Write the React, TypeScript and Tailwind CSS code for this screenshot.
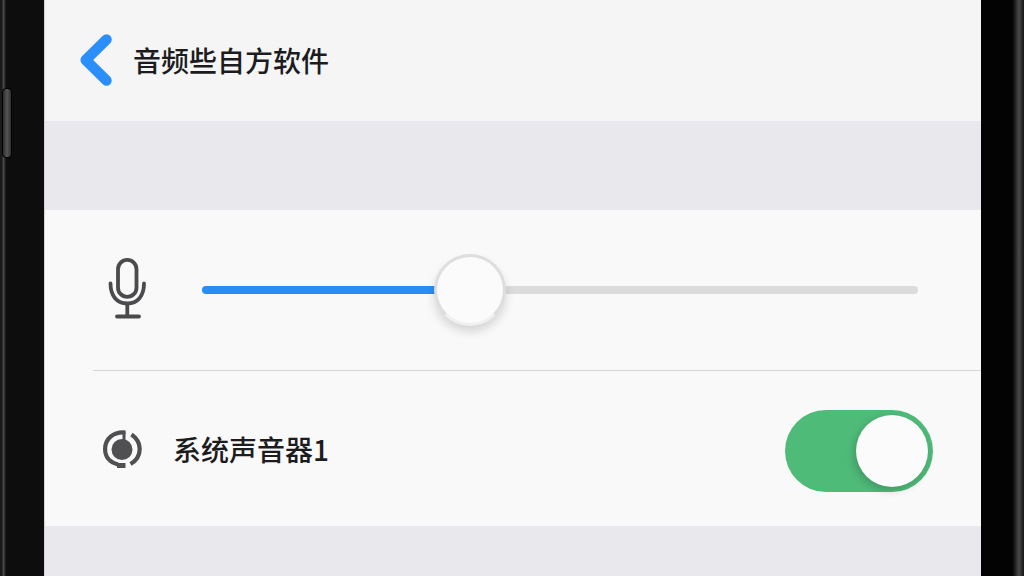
import { useState } from "react";

function BackIcon() {
    return (
        <svg className="h-13 w-8 shrink-0" viewBox="0 0 32 52" fill="none" aria-hidden="true">
            <path d="M26.500 5.500 5.700 26l20.800 20.500" stroke="#2a8ffa" strokeWidth="10.500" strokeLinecap="round" strokeLinejoin="round" />
        </svg>
    )
}

function MicIcon() {
    return (
        <svg className="h-16 w-10 shrink-0" viewBox="0 0 40 64" fill="none" stroke="#4b4b4d" strokeWidth="3.800" strokeLinecap="round" aria-hidden="true">
            <rect x="10" y="1.900" width="18.500" height="37" rx="9.250" />
            <path d="M2.500 25.500c0 12.500 6.500 20 16.800 20S36 38 36 25.500" />
            <path d="M19.300 46v12M9 58.500h22" />
        </svg>
    )
}

function SoundIcon() {
    return (
        <svg className="size-10 shrink-0" viewBox="0 0 40 40" fill="none" stroke="#505052" strokeWidth="4.200" aria-hidden="true">
            <circle cx="20" cy="20.500" r="10.500" fill="#505052" stroke="none" />
            <path d="M22 3v9" strokeWidth="3" />
            <path d="M23.500 3.500C11 2.500 3.100 10 3.100 20S9 33.500 16 35.500" />
            <path d="M15 36.500h8.500" strokeWidth="5" />
            <path d="M29.500 5.500C34.500 9 37.700 14 37.700 20S34.500 31.500 28.500 35" />
        </svg>
    )
}

interface VolumeSliderProps {
    value: number
    onChange: (value: number) => void
}

function VolumeSlider({ value, onChange }: VolumeSliderProps) {
    return (
        <input
            type="range"
            min={0}
            max={100}
            value={value}
            aria-label="麦克风音量"
            onChange={(e) => onChange(Number(e.target.value))}
            style={{ backgroundImage: `linear-gradient(to right, #278ef5 ${value}%, #dcdcdc ${value}%)` }}
            className="h-2 min-w-0 flex-1 cursor-pointer appearance-none rounded-full outline-none [&::-webkit-slider-thumb]:size-18 [&::-webkit-slider-thumb]:appearance-none [&::-webkit-slider-thumb]:rounded-full [&::-webkit-slider-thumb]:border-3 [&::-webkit-slider-thumb]:border-[#dedede] [&::-webkit-slider-thumb]:border-b-[#f0f0f0] [&::-webkit-slider-thumb]:bg-[#fbfbfb] [&::-webkit-slider-thumb]:shadow-[0_6px_10px_rgba(0,0,0,0.14)]"
        />
    )
}

export default function App() {
    const [volume, setVolume] = useState(36)
    const [enabled, setEnabled] = useState(true)

    return (
        <div className="flex min-h-screen bg-black font-['Noto_Sans_CJK_SC',sans-serif] text-[#1c1c1e]">
            {/* left edge of the phone with its side button */}
            <div className="w-11 shrink-0 bg-linear-to-r from-[#1a1a1a] from-4% via-[#4a4a4a] via-8% to-[#0d0d0d] to-14% pt-22">
                <div className="ml-0.5 h-[70px] w-2.5 rounded-sm border border-black bg-linear-to-r from-[#2a2a2a] via-[#555] to-[#303030]" />
            </div>

            <main className="flex min-w-0 flex-1 flex-col border-l border-[#d4d4d8] bg-[#e9e8ed]">
                <header className="flex h-[121px] items-center gap-[21px] bg-[#f5f5f6] px-[35px] pb-0.5">
                    <button type="button" aria-label="返回">
                        <BackIcon />
                    </button>
                    <h1 className="text-[28px] leading-10 font-medium">音频些自方软件</h1>
                </header>

                <section className="mt-[89px] bg-[#f9f9f9]">
                    <div className="flex h-40 items-center gap-[54px] px-[63px]">
                        <MicIcon />
                        <VolumeSlider value={volume} onChange={setVolume} />
                    </div>
                    <hr className="ml-12 border-[#d6d6d6]" />
                    <div className="flex h-[155px] items-center pt-1 pr-12 pl-[57px]">
                        <label htmlFor="system-sound" className="flex flex-1 items-center gap-[31px] pb-1 text-[28px] leading-10 font-medium">
                            <SoundIcon />
                            系统声音器1
                        </label>
                        <input
                            id="system-sound"
                            type="checkbox"
                            role="switch"
                            checked={enabled}
                            onChange={(e) => setEnabled(e.target.checked)}
                            className="flex h-[82px] w-[148px] shrink-0 cursor-pointer appearance-none items-center rounded-full bg-[#d5d5d8] px-[5px] before:size-18 before:rounded-full before:bg-[#fbfbfb] before:shadow-[-2px_3px_8px_rgba(0,0,0,0.2)] checked:justify-end checked:bg-[#4fbb79]"
                        />
                    </div>
                </section>
            </main>

            {/* right edge of the phone */}
            <div className="w-[43px] shrink-0 bg-linear-to-r from-[#030303] from-72% via-[#4a4a4a] via-88% to-[#161616]" />
        </div>
    )
}
